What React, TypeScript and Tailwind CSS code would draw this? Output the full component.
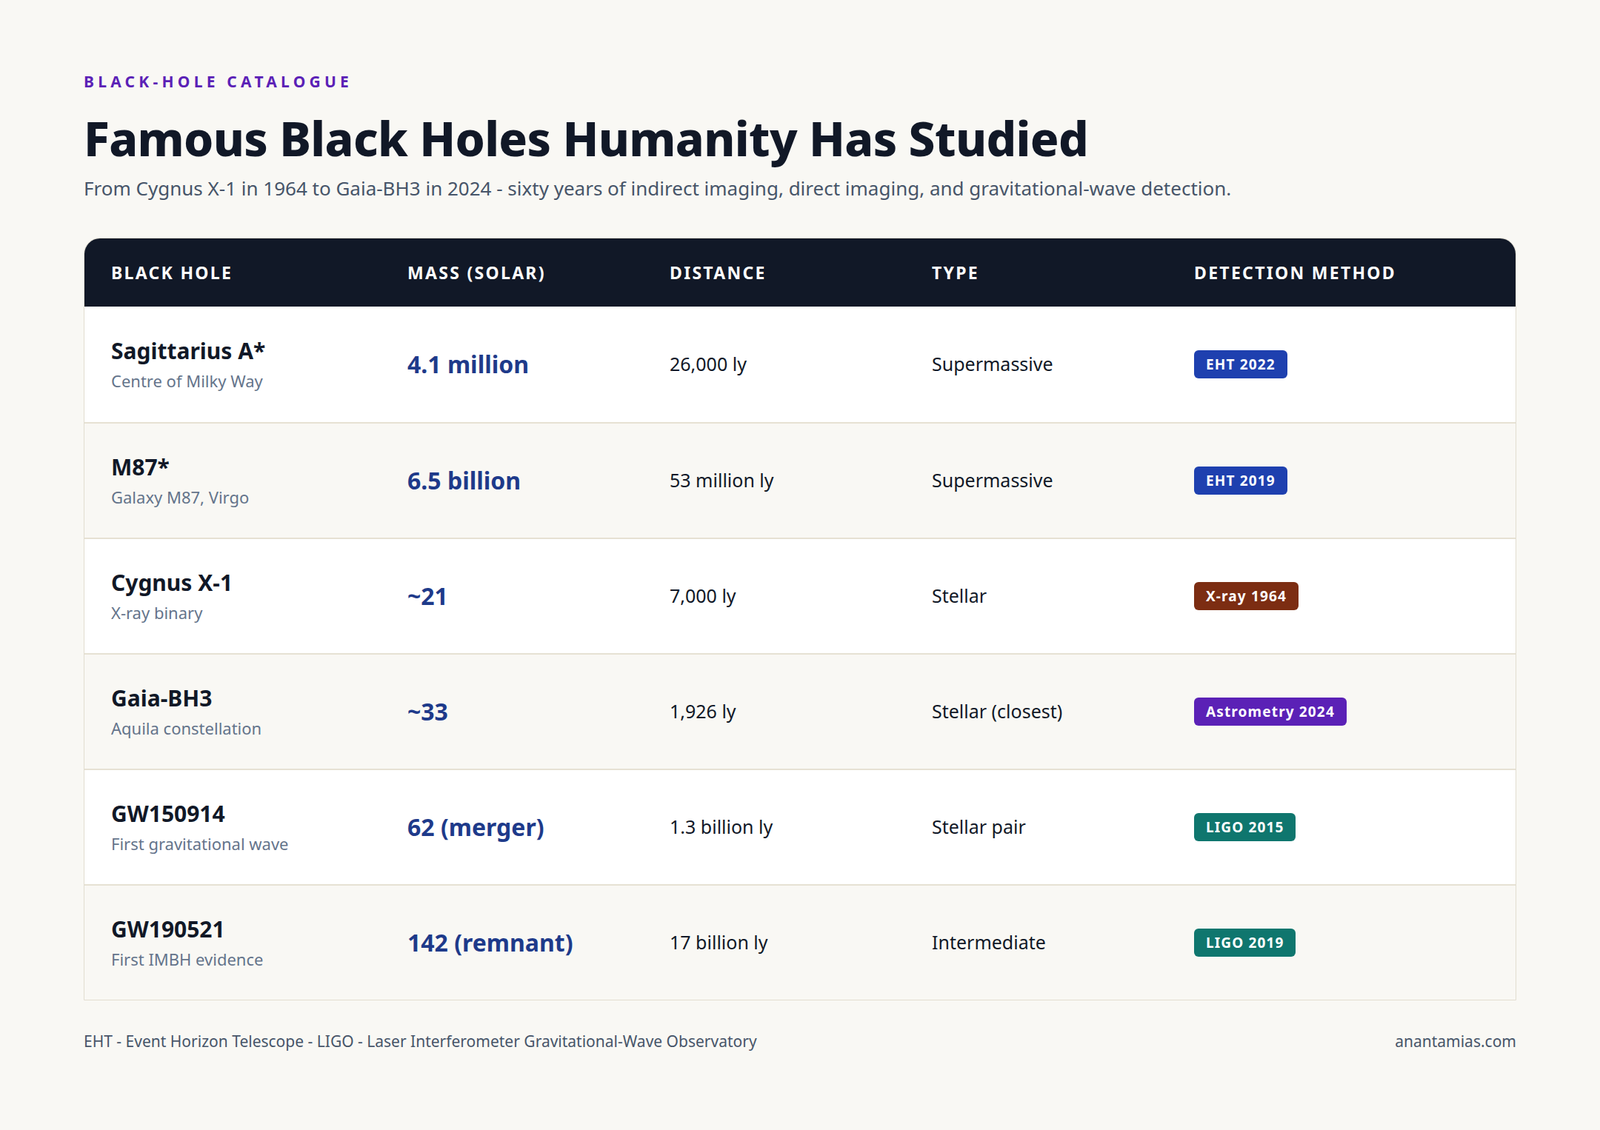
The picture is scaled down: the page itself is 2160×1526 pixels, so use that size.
const rows = [
  { n: "Sagittarius A*", s: "Centre of Milky Way", m: "4.1 million", d: "26,000 ly", t: "Supermassive", b: "EHT 2022", c: "bg-[#1e40af]" },
  { n: "M87*", s: "Galaxy M87, Virgo", m: "6.5 billion", d: "53 million ly", t: "Supermassive", b: "EHT 2019", c: "bg-[#1e40af]" },
  { n: "Cygnus X-1", s: "X-ray binary", m: "~21", d: "7,000 ly", t: "Stellar", b: "X-ray 1964", c: "bg-[#7c2d12]" },
  { n: "Gaia-BH3", s: "Aquila constellation", m: "~33", d: "1,926 ly", t: "Stellar (closest)", b: "Astrometry 2024", c: "bg-[#5b21b6]" },
  { n: "GW150914", s: "First gravitational wave", m: "62 (merger)", d: "1.3 billion ly", t: "Stellar pair", b: "LIGO 2015", c: "bg-[#0f766e]" },
  { n: "GW190521", s: "First IMBH evidence", m: "142 (remnant)", d: "17 billion ly", t: "Intermediate", b: "LIGO 2019", c: "bg-[#0f766e]" },
];
const cols = "grid grid-cols-[400px_354px_354px_354px_1fr] items-center";
export default function App() {
  return (
    <div className="w-[2160px] h-[1526px] bg-[#f9f8f4] px-[113px] pt-[100px] font-['Inter',sans-serif]">
      <div className="text-[21px] font-bold tracking-[0.25em] text-[#5b21b6] leading-none">BLACK-HOLE CATALOGUE</div>
      <h1 className="mt-[34px] text-[64px] font-extrabold text-[#111827] leading-none tracking-[-0.01em]">Famous Black Holes Humanity Has Studied</h1>
      <p className="mt-[22px] text-[26px] text-[#475569] leading-none">From Cygnus X-1 in 1964 to Gaia-BH3 in 2024 - sixty years of indirect imaging, direct imaging, and gravitational-wave detection.</p>
      <div className="mt-[54px] border border-[#e2ddd0] rounded-t-[22px] overflow-hidden">
        <div className={`${cols} h-[92px] bg-[#111827] px-[36px] text-white text-[23px] font-bold tracking-[0.1em]`}>
          <div>BLACK HOLE</div><div>MASS (SOLAR)</div><div>DISTANCE</div><div>TYPE</div><div>DETECTION METHOD</div>
        </div>
        {rows.map((r, i) => (
          <div key={i} className={`${cols} h-[156px] px-[36px] ${i % 2 ? "bg-[#f9f8f4]" : "bg-white"} ${i ? "border-t-2 border-[#e6e1d3]" : ""}`}>
            <div>
              <div className="text-[30px] font-bold text-[#111827] leading-none">{r.n}</div>
              <div className="mt-[14px] text-[22px] text-[#64748b] leading-none">{r.s}</div>
            </div>
            <div className="text-[32px] font-bold text-[#1e3a8a]">{r.m}</div>
            <div className="text-[25px] text-[#111827]">{r.d}</div>
            <div className="text-[25px] text-[#111827]">{r.t}</div>
            <div><span className={`${r.c} inline-block text-white text-[19px] font-bold tracking-[0.06em] px-[16px] h-[38px] leading-[38px] rounded-[6px]`}>{r.b}</span></div>
          </div>
        ))}
      </div>
      <div className="mt-[40px] flex justify-between text-[21px] text-[#475569]">
        <span>EHT - Event Horizon Telescope - LIGO - Laser Interferometer Gravitational-Wave Observatory</span>
        <span>anantamias.com</span>
      </div>
    </div>
  );
}
